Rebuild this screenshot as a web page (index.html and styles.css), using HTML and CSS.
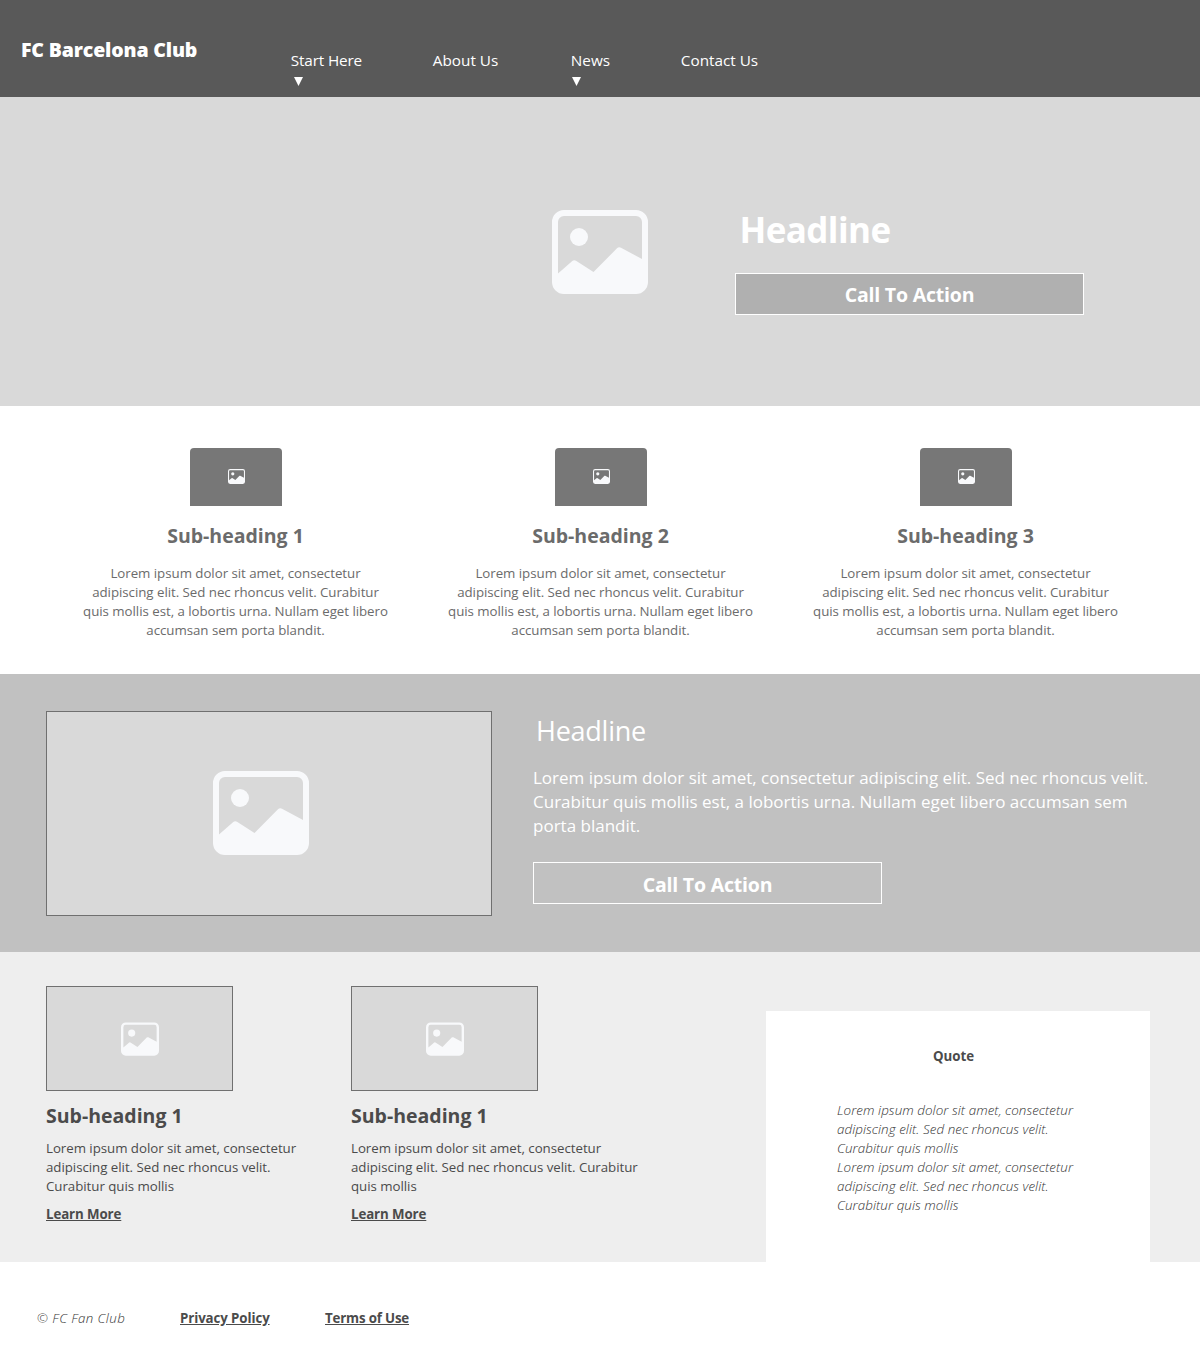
FILE: index.html
```html
<!DOCTYPE html>
<html lang="en">
<head>
<meta charset="utf-8">
<title>FC Barcelona Club</title>
<link rel="stylesheet" href="styles.css">
</head>
<body>
<svg class="defs" width="0" height="0" aria-hidden="true">
  <symbol id="picture" viewBox="0 0 96 84">
    <path fill-rule="evenodd" d="M12 0h72a12 12 0 0 1 12 12v60a12 12 0 0 1-12 12H12A12 12 0 0 1 0 72V12A12 12 0 0 1 12 0zM12 6a6 6 0 0 0-6 6v51.500L20 51.200q2-1.600 4-.4L41.500 62 65 38.300q1.800-1.600 4-.5L90 49V12a6 6 0 0 0-6-6z"/>
    <circle cx="27" cy="27" r="9"/>
  </symbol>
</svg>

<header class="topbar">
  <h1 class="brand">FC Barcelona Club</h1>
  <nav class="nav">
    <a class="nav-item nav-start">Start Here<svg class="caret" viewBox="0 0 9 9"><path d="M0 0h9L4.500 9z"/></svg></a>
    <a class="nav-item nav-about">About Us</a>
    <a class="nav-item nav-news">News<svg class="caret" viewBox="0 0 9 9"><path d="M0 0h9L4.500 9z"/></svg></a>
    <a class="nav-item nav-contact">Contact Us</a>
  </nav>
</header>

<section class="hero">
  <svg class="icon icon-lg"><use href="#picture"/></svg>
  <div class="hero-copy">
    <h2 class="hero-title">Headline</h2>
    <a class="cta cta-filled">Call To Action</a>
  </div>
</section>

<section class="features">
  <article class="feature">
    <div class="tile"><svg class="icon icon-sm"><use href="#picture"/></svg></div>
    <h3 class="subheading">Sub-heading 1</h3>
    <p class="body-text">Lorem ipsum dolor sit amet, consectetur<br>adipiscing elit. Sed nec rhoncus velit. Curabitur<br>quis mollis est, a lobortis urna. Nullam eget libero<br>accumsan sem porta blandit.</p>
  </article>
  <article class="feature">
    <div class="tile"><svg class="icon icon-sm"><use href="#picture"/></svg></div>
    <h3 class="subheading">Sub-heading 2</h3>
    <p class="body-text">Lorem ipsum dolor sit amet, consectetur<br>adipiscing elit. Sed nec rhoncus velit. Curabitur<br>quis mollis est, a lobortis urna. Nullam eget libero<br>accumsan sem porta blandit.</p>
  </article>
  <article class="feature">
    <div class="tile"><svg class="icon icon-sm"><use href="#picture"/></svg></div>
    <h3 class="subheading">Sub-heading 3</h3>
    <p class="body-text">Lorem ipsum dolor sit amet, consectetur<br>adipiscing elit. Sed nec rhoncus velit. Curabitur<br>quis mollis est, a lobortis urna. Nullam eget libero<br>accumsan sem porta blandit.</p>
  </article>
</section>

<section class="band">
  <div class="frame frame-lg"><svg class="icon icon-lg"><use href="#picture"/></svg></div>
  <div class="band-copy">
    <h2 class="band-title">Headline</h2>
    <p class="lead">Lorem ipsum dolor sit amet, consectetur adipiscing elit. Sed nec rhoncus velit.<br>Curabitur quis mollis est, a lobortis urna. Nullam eget libero accumsan sem<br>porta blandit.</p>
    <a class="cta cta-outline">Call To Action</a>
  </div>
</section>

<section class="lower">
  <article class="story">
    <div class="frame frame-md"><svg class="icon icon-md"><use href="#picture"/></svg></div>
    <h3 class="subheading">Sub-heading 1</h3>
    <p class="body-text">Lorem ipsum dolor sit amet, consectetur<br>adipiscing elit. Sed nec rhoncus velit.<br>Curabitur quis mollis</p>
    <a class="link">Learn More</a>
  </article>
  <article class="story">
    <div class="frame frame-md"><svg class="icon icon-md"><use href="#picture"/></svg></div>
    <h3 class="subheading">Sub-heading 1</h3>
    <p class="body-text">Lorem ipsum dolor sit amet, consectetur<br>adipiscing elit. Sed nec rhoncus velit. Curabitur<br>quis mollis</p>
    <a class="link">Learn More</a>
  </article>
  <aside class="quote">
    <h4 class="quote-title">Quote</h4>
    <p class="quote-text">Lorem ipsum dolor sit amet, consectetur<br>adipiscing elit. Sed nec rhoncus velit.<br>Curabitur quis mollis<br>Lorem ipsum dolor sit amet, consectetur<br>adipiscing elit. Sed nec rhoncus velit.<br>Curabitur quis mollis</p>
  </aside>
</section>

<footer class="footer">
  <span class="copyright">© FC Fan Club</span>
  <div class="privacy"><a class="link">Privacy Policy</a></div>
  <a class="link terms">Terms of Use</a>
</footer>
</body>
</html>
```
FILE: styles.css
```css
* { box-sizing: border-box; margin: 0; padding: 0; }

body {
  width: 1200px;
  font-family: "Open Sans", "Noto Sans", sans-serif;
  background: #fff;
  color: #4b4b4b;
  white-space: nowrap;
}

.defs { display: block; }

.icon { display: block; fill: #f8f9fb; flex: none; }
.icon-lg { width: 96px; height: 84px; }
.icon-md { width: 38px; height: 34px; }
.icon-sm { width: 17px; height: 15px; }

.topbar {
  display: flex;
  height: 97px;
  padding-left: 21px;
  background: #595959;
  color: #fff;
}
.brand {
  width: 269px;
  padding-top: 36px;
  font-size: 19.5px;
  line-height: 27px;
  font-weight: 800;
  letter-spacing: -0.15px;
}
.nav { display: flex; padding-top: 50px; }
.nav-item { padding-left: 0.8px; font-size: 15.3px; line-height: 21px; }
.nav-start { width: 142px; letter-spacing: -0.15px; }
.nav-about { width: 138px; }
.nav-news { width: 110px; }
.caret { display: block; width: 9px; height: 9px; margin: 6px 0 0 3.500px; fill: #fff; }
.nav-news .caret { margin-left: 1.500px; }

.hero {
  display: flex;
  height: 309px;
  padding: 113px 0 0 552px;
  background: #d9d9d9;
}
.hero-copy { margin-left: 87px; color: #fff; }
.hero-title {
  height: 63px;
  padding-left: 4.500px;
  font-size: 35px;
  line-height: 40px;
  font-weight: 700;
  letter-spacing: -0.600px;
}
.cta {
  display: block;
  width: 349px;
  height: 42px;
  border: 1px solid #fff;
  color: #fff;
  font-size: 19.5px;
  line-height: 42px;
  font-weight: 700;
  letter-spacing: -0.2px;
  text-align: center;
}
.cta-filled { background: #b0b0b0; }
.cta-outline { line-height: 43px; }

.features {
  display: grid;
  grid-template-columns: repeat(3, 365px);
  height: 268px;
  padding: 42px 0 0 53px;
  color: #6b6b6b;
}
.feature { display: flex; flex-direction: column; align-items: center; text-align: center; }
.tile {
  display: flex;
  justify-content: center;
  width: 92px;
  height: 58px;
  padding: 21px 0 0 1px;
  border-radius: 4px 4px 0 0;
  background: #777;
}
.subheading { font-size: 19.5px; line-height: 27px; font-weight: 700; }
.feature .subheading { margin-top: 16px; }
.body-text { font-size: 13.300px; line-height: 19px; letter-spacing: -0.04px; }
.feature .body-text { margin-top: 15px; }

.band {
  display: flex;
  gap: 41px;
  height: 278px;
  padding: 37px 0 0 46px;
  background: #c1c1c1;
}
.frame {
  display: flex;
  align-items: center;
  justify-content: center;
  border: 1px solid #707070;
  background: #d9d9d9;
}
.frame-lg { width: 446px; height: 205px; padding: 0 16px 1px 0; }
.frame-md { width: 187px; height: 105px; }
.band-copy { color: #fff; }
.band-title {
  height: 55px;
  padding-left: 3px;
  font-size: 27px;
  line-height: 40px;
  font-weight: 400;
  letter-spacing: -0.25px;
}
.lead { height: 96px; font-size: 17px; line-height: 24px; }

.lower {
  display: flex;
  height: 310px;
  padding: 34px 0 0 46px;
  background: #eee;
}
.story { width: 305px; }
.story .subheading { margin-top: 11px; }
.story .body-text { margin-top: 10px; }
.link {
  font-size: 13.300px;
  line-height: 19px;
  font-weight: 700;
  letter-spacing: -0.1px;
  text-decoration: underline;
}
.story .link { display: block; margin-top: 9px; }
.quote {
  width: 384px;
  margin: 25px 0 0 110px;
  padding: 36px 0 0 71px;
  background: #fff;
}
.quote-title {
  padding-left: 96px;
  font-size: 13.300px;
  line-height: 19px;
  font-weight: 700;
}
.quote-text {
  margin-top: 35px;
  color: #333;
  font-size: 13.400px;
  line-height: 19px;
  font-weight: 300;
  font-style: italic;
  letter-spacing: 0.06px;
}

.footer { display: flex; height: 101px; padding: 47px 0 0 37px; font-size: 13.300px; line-height: 19px; }
.copyright { width: 143px; color: #333; font-weight: 300; font-style: italic; letter-spacing: 0.4px; }
.privacy { width: 145px; }
.terms { letter-spacing: -0.17px; }
```
